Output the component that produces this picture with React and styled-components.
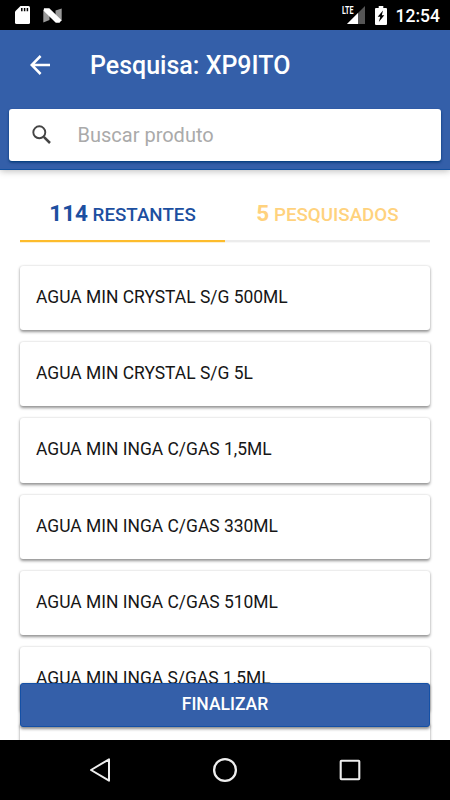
import React from 'react';
import styled, { createGlobalStyle } from 'styled-components';

const GlobalStyle = createGlobalStyle`
  * {
    box-sizing: border-box;
  }
  body {
    margin: 0;
    font-family: Roboto, 'Liberation Sans', sans-serif;
  }
`;

const products = [
  'AGUA MIN CRYSTAL S/G 500ML',
  'AGUA MIN CRYSTAL S/G 5L',
  'AGUA MIN INGA C/GAS 1,5ML',
  'AGUA MIN INGA C/GAS 330ML',
  'AGUA MIN INGA C/GAS 510ML',
  'AGUA MIN INGA S/GAS 1,5ML',
  '',
];

const Screen = styled.div`
  position: relative;
  display: grid;
  grid-template-rows: 30px 140px minmax(0, 1fr) 60px;
  width: 450px;
  height: 800px;
  overflow: hidden;
  background: #fff;
`;

const StatusBar = styled.div`
  display: flex;
  align-items: center;
  padding: 0 10px 0 15px;
  background: #000;
  color: #fff;
  svg {
    display: block;
    flex: none;
  }
`;

const Clock = styled.span`
  width: 45px;
  margin-left: 8px;
  padding-top: 2px;
  font-size: 17.5px;
  font-weight: 500;
  line-height: 26px;
  text-align: right;
`;

const Spacer = styled.div`
  flex: 1;
`;

const Header = styled.header`
  position: relative;
  z-index: 1;
  background: #345fa9;
  border-bottom: 1px solid #12509f;
  box-shadow: 0 1px 7px rgba(0, 0, 0, 0.28);
`;

const TitleBar = styled.div`
  display: flex;
  align-items: center;
  height: 70px;
  padding-left: 30px;
  color: #fff;
`;

const Title = styled.h1`
  margin: 0 0 0 40px;
  padding-top: 2px;
  font-size: 25px;
  font-weight: 500;
  line-height: 30px;
  white-space: nowrap;
`;

const SearchBox = styled.div`
  display: flex;
  align-items: center;
  height: 52.5px;
  margin: 8.5px 8.75px 0 8.5px;
  padding-left: 23px;
  border-radius: 3px;
  background: #fff;
  box-shadow: 0 1px 2px #003f80, 0 2px 3px rgba(0, 40, 90, 0.35);
`;

const Placeholder = styled.span`
  margin-left: 26px;
  color: #aaa;
  font-size: 20px;
`;

const Content = styled.main`
  min-height: 0;
  padding: 0 20px;
  overflow: hidden;
`;

const Tabs = styled.div`
  display: grid;
  grid-template-columns: 1fr 1fr;
  height: 72px;
  margin-bottom: 24.1px;
`;

const Tab = styled.div`
  padding-top: 29px;
  border-bottom: 2px solid ${(p) => (p.$active ? '#fdbc2c' : '#ececec')};
  box-shadow: 0 1px 0 ${(p) => (p.$active ? '#fef0d0' : '#f8f8f8')};
  color: ${(p) => (p.$active ? '#1d4fa0' : '#ffd27d')};
  font-size: 18.75px;
  font-weight: 500;
  line-height: 29px;
  text-align: center;
  white-space: nowrap;
`;

const Count = styled.span`
  font-size: 22.5px;
  font-weight: 700;
`;

const Card = styled.div`
  height: 64.1px;
  margin-bottom: 12.1px;
  padding: 19px 16px;
  border-radius: 3px;
  background: #fff;
  box-shadow: 0 1.5px 3px rgba(0, 0, 0, 0.42), 0 0 2px rgba(0, 0, 0, 0.05);
  color: #161616;
  font-size: 17.45px;
  line-height: 24px;
  white-space: nowrap;
`;

// stays on top of the list
const FinishButton = styled.button`
  position: absolute;
  z-index: 2;
  left: 20px;
  bottom: 73px;
  width: 410px;
  height: 44.5px;
  padding: 0 0 2px;
  border: 1px solid #1450a6;
  border-radius: 3px;
  background: #345fa9;
  box-shadow: 0 1.5px 3px rgba(0, 0, 0, 0.45);
  color: #fff;
  font-family: inherit;
  font-size: 17.5px;
  font-weight: 500;
`;

const NavBar = styled.nav`
  position: relative;
  z-index: 1;
  display: flex;
  justify-content: center;
  align-items: center;
  gap: 95px;
  background: #000;
  svg {
    display: block;
  }
`;

const LogoIcon = styled.svg`
  margin-left: 13px;
`;

const BatteryIcon = styled.svg`
  margin-left: 10px;
`;

const SdCard = () => (
  <svg width='15' height='18' viewBox='0 0 15 18'>
    <path d='M5.5 0H13.5Q15 0 15 1.5V16.5Q15 18 13.5 18H1.5Q0 18 0 16.5V5.5Z' fill='#fff' />
    <path d='M6.8 2V5.3M9.6 2V5.3M12.4 2V5.3' stroke='#000' strokeWidth='1.5' />
  </svg>
);

const NLogo = () => (
  <LogoIcon width='19' height='15' viewBox='0 0 19 15'>
    <path d='M.3 2L6.5 6.5V12L.3 14.5ZM18.7 .5V13L12.5 8.5V2.5Z' fill='#999' />
    <path d='M1 .3H6.3L18.6 12.3L16.5 14.7H12.8L.6 2.7Z' fill='#fff' />
  </LogoIcon>
);

const Signal = () => (
  <svg width='24' height='20' viewBox='0 0 24 20'>
    <path d='M24 1V19H6Z' fill='#555' />
    <path d='M17 8V19H6Z' fill='#fff' />
    <text x='1' y='9.3' fill='#fff' stroke='#000' strokeWidth='1' paintOrder='stroke' fontSize='10.5' fontWeight='700' textLength='11.5' lengthAdjust='spacingAndGlyphs'>
      LTE
    </text>
  </svg>
);

const Battery = () => (
  <BatteryIcon width='12' height='19' viewBox='0 0 12 19'>
    <path d='M3.7 0H8.3V2H11Q12 2 12 3V18Q12 19 11 19H1Q0 19 0 18V3Q0 2 1 2H3.7Z' fill='#fff' />
    <path d='M8 4.5L2.7 10.8H5.3L3.8 16L9.3 9.3H6.8Z' fill='#000' />
  </BatteryIcon>
);

const BackArrow = () => (
  <svg width='20' height='20' viewBox='0 0 20 20' fill='none' stroke='#fff' strokeWidth='2.5'>
    <path d='M20 10H2M10.6 1L1.7 10L10.6 19' />
  </svg>
);

const SearchIcon = () => (
  <svg width='20' height='20' viewBox='0 0 20 20' fill='none' stroke='#444' strokeWidth='1.9'>
    <circle cx='7.3' cy='7.3' r='6' />
    <path d='M11.8 11.8L18 18' strokeWidth='2.5' />
  </svg>
);

export default function App() {
  return (
    <>
      <GlobalStyle />
      <Screen>
        <StatusBar>
          <SdCard />
          <NLogo />
          <Spacer />
          <Signal />
          <Battery />
          <Clock>12:54</Clock>
        </StatusBar>
        <Header>
          <TitleBar>
            <BackArrow />
            <Title>Pesquisa: XP9ITO</Title>
          </TitleBar>
          <SearchBox>
            <SearchIcon />
            <Placeholder>Buscar produto</Placeholder>
          </SearchBox>
        </Header>
        <Content>
          <Tabs>
            <Tab $active>
              <Count>114</Count> RESTANTES
            </Tab>
            <Tab>
              <Count>5</Count> PESQUISADOS
            </Tab>
          </Tabs>
          {products.map((name, i) => (
            <Card key={i}>{name}</Card>
          ))}
        </Content>
        <FinishButton>FINALIZAR</FinishButton>
        <NavBar>
          <svg width='30' height='30' viewBox='0 0 30 30' fill='none' stroke='#eee' strokeWidth='2' strokeLinejoin='round'>
            <path d='M24 4.3V25.7L6 15Z' />
          </svg>
          <svg width='30' height='30' viewBox='0 0 30 30' fill='none' stroke='#eee' strokeWidth='2.3'>
            <circle cx='15' cy='15' r='10.9' />
          </svg>
          <svg width='30' height='30' viewBox='0 0 30 30' fill='none' stroke='#eee' strokeWidth='2.1'>
            <rect x='5.7' y='5.7' width='18.6' height='18.6' rx='0.7' />
          </svg>
        </NavBar>
      </Screen>
    </>
  );
}
